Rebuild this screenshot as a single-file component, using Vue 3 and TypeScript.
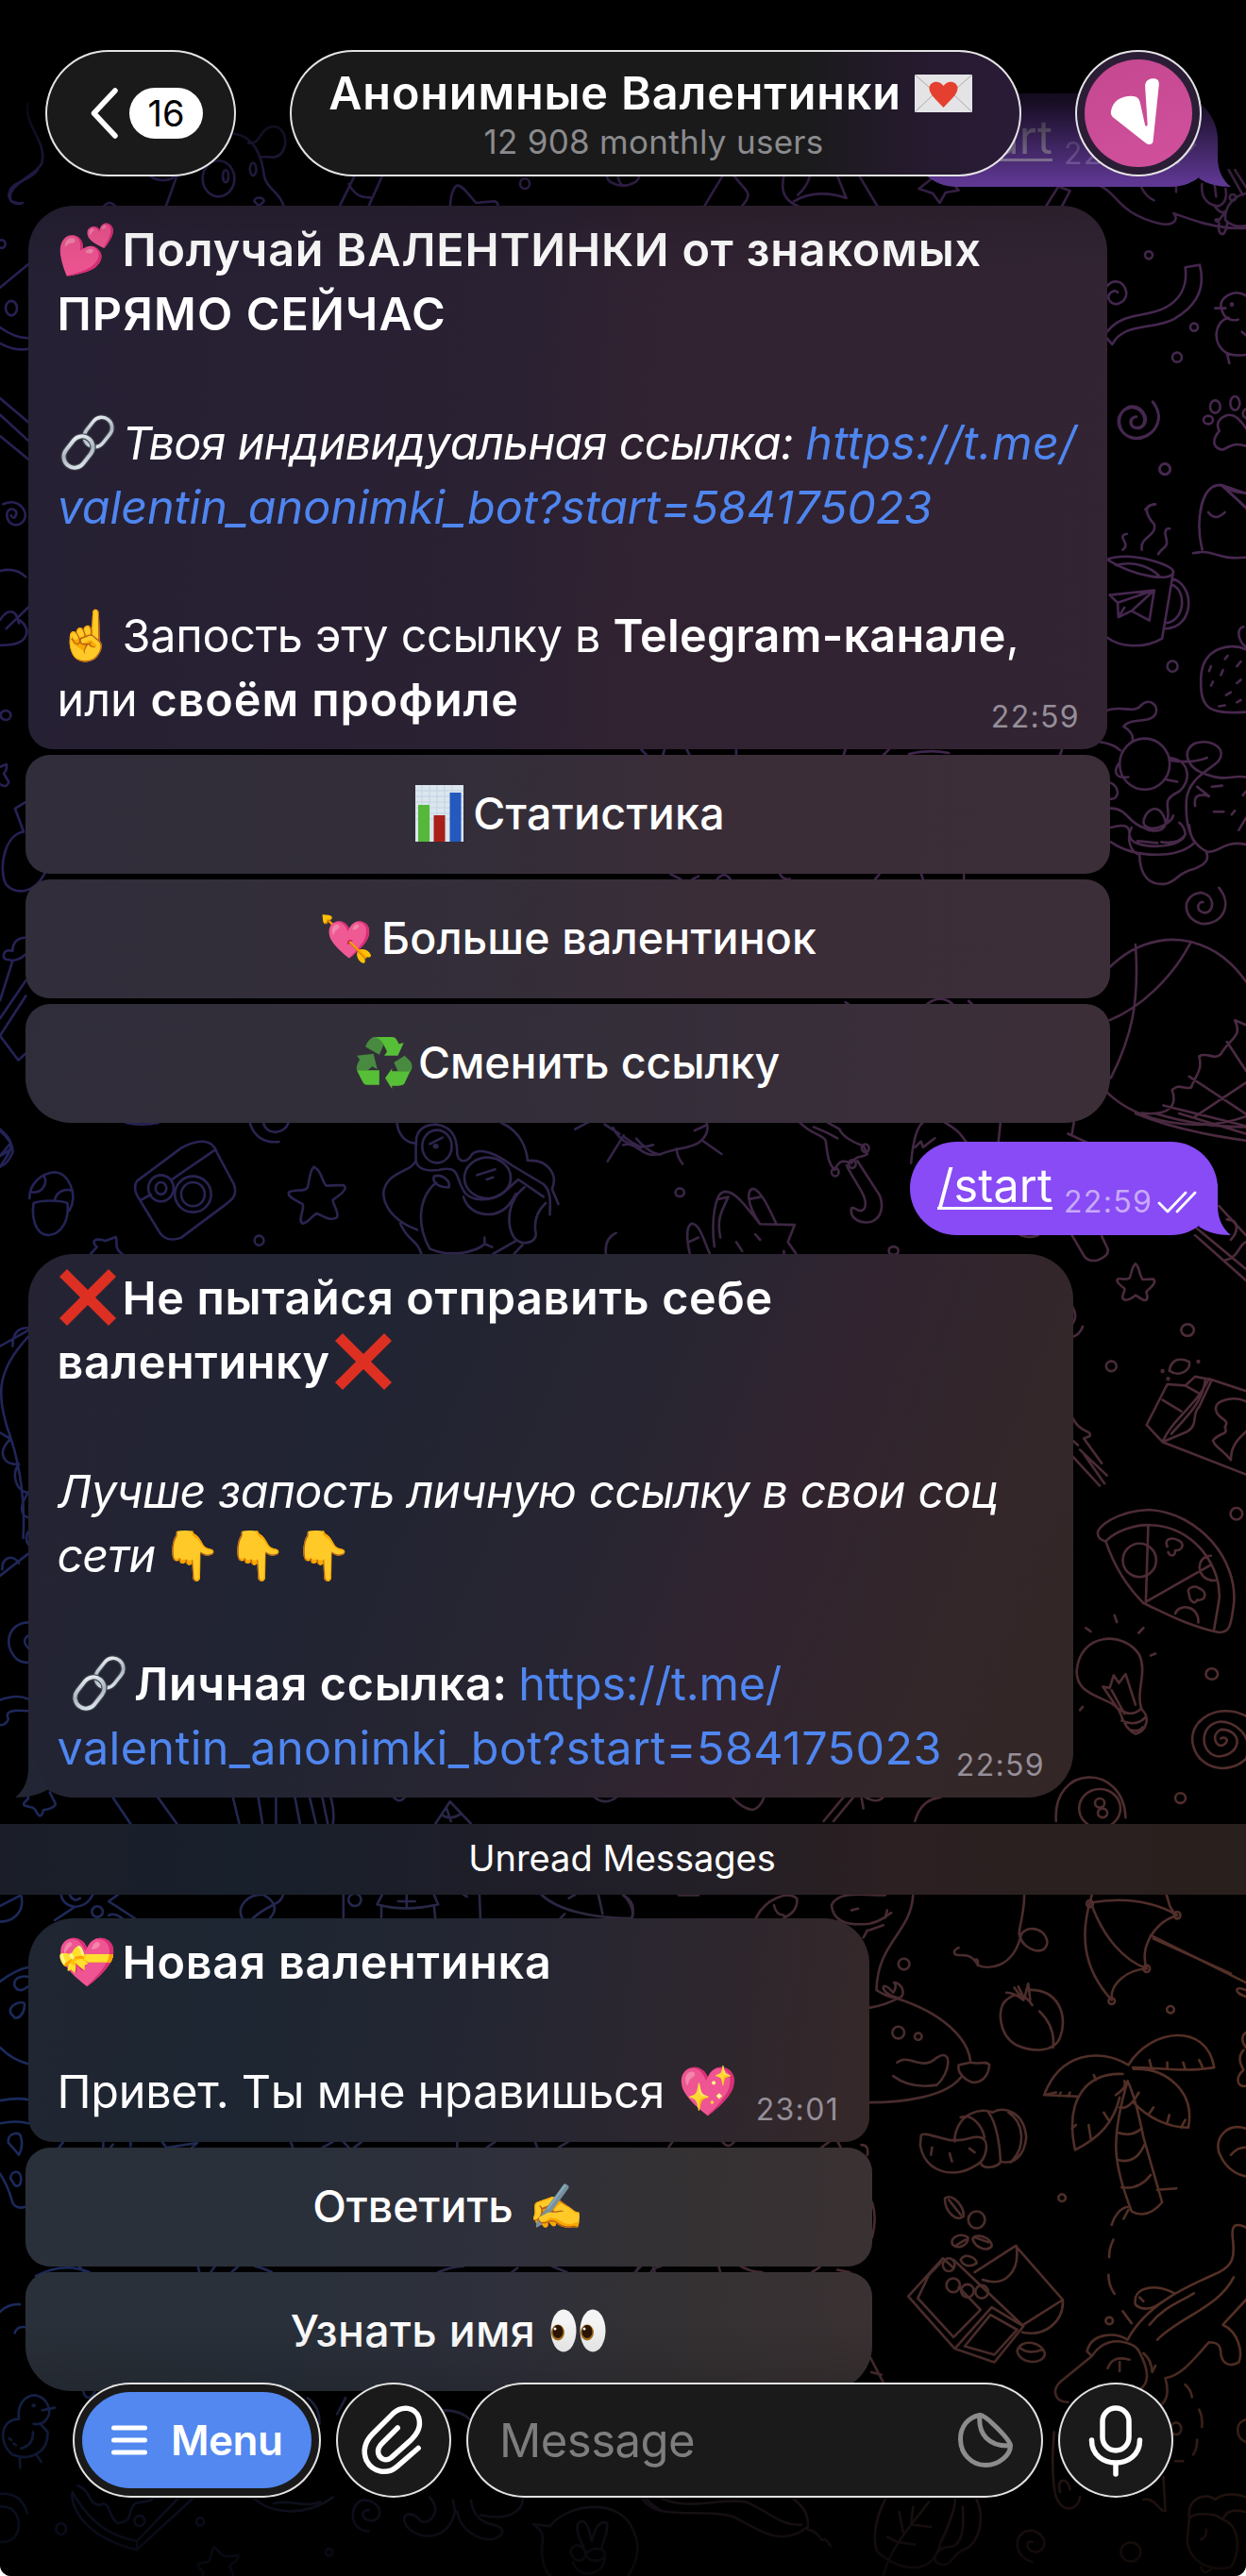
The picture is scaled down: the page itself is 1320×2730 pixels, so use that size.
<script setup lang="ts">
interface Segment {
  text?: string
  emoji?: string
  icon?: 'chain' | 'cross'
  tone?: 'bold' | 'italic' | 'link' | 'link-italic'
  tracking?: number
  before?: number
}
type Line = Segment[]

interface Sketch {
  at: string
  path: string
  dots?: number[][]
}

const promo: Line[] = [
  [{ emoji: '💕' }, { text: 'Получай ВАЛЕНТИНКИ от знакомых', tone: 'bold', tracking: 0.81 }],
  [{ text: 'ПРЯМО СЕЙЧАС', tone: 'bold', tracking: 1.15 }],
  [],
  [
    { icon: 'chain' },
    { text: 'Твоя индивидуальная ссылка: ', tone: 'italic', tracking: -0.66 },
    { text: 'https://t.me/', tone: 'link-italic', tracking: 0.43 }
  ],
  [{ text: 'valentin_anonimki_bot?start=584175023', tone: 'link-italic', tracking: -0.06 }],
  [],
  [
    { emoji: '☝️' },
    { text: 'Запость эту ссылку в ', tracking: -0.26 },
    { text: 'Telegram-канале', tone: 'bold', tracking: 0.27 },
    { text: ',' }
  ],
  [{ text: 'или ' }, { text: 'своём профиле', tone: 'bold', tracking: 0.96 }]
]

const warning: Line[] = [
  [{ icon: 'cross' }, { text: 'Не пытайся отправить себе', tone: 'bold', tracking: 0.66 }],
  [{ text: 'валентинку', tone: 'bold', tracking: 0.61 }, { icon: 'cross', before: 4 }],
  [],
  [{ text: 'Лучше запость личную ссылку в свои соц', tone: 'italic', tracking: -0.39 }],
  [
    { text: 'сети', tone: 'italic', tracking: -1 },
    { emoji: '👇', before: 8 },
    { emoji: '👇', before: 1.3 },
    { emoji: '👇', before: 1.3 }
  ],
  [],
  [
    { icon: 'chain', before: 13.5 },
    { text: 'Личная ссылка:', tone: 'bold', tracking: 0.66 },
    { text: ' ', tracking: -2 },
    { text: 'https://t.me/', tone: 'link', tracking: -0.21 }
  ],
  [{ text: 'valentin_anonimki_bot?start=584175023', tone: 'link', tracking: 0.39 }]
]

const valentine: Line[] = [
  [{ emoji: '💝' }, { text: 'Новая валентинка', tone: 'bold', tracking: 0.73 }],
  [],
  [{ text: 'Привет. Ты мне нравишься', tracking: -0.25 }, { emoji: '💖', before: 15 }]
]

/* Wallpaper line art, grouped by the area of the chat it decorates. */
const sketches: Sketch[] = [
  {
    at: 'translate(0 0) scale(.4209 .3333)',
    path: 'M70 330C60 400 120 450 105 520C90 560 10 590 28 640L50 648M445 560L418 655M378 560C400 580 430 575 440 560M585 425C640 430 660 500 665 560C670 600 705 610 714 655M625 455C660 460 650 405 690 402C725 405 730 490 690 500L655 498M892 560L855 655M962 560L928 655M878 585Q895 630 932 628M1133 655C1135 610 1145 590 1152 590C1165 590 1180 620 1198 645L1245 640Q1256 645 1252 655M262 655Q275 635 290 655M640 640C640 625 665 625 664 640L652 655ZM1555 560C1560 590 1568 590 1575 590',
    dots: [[550, 568, 40, 57], [568, 560, 7, 20], [637, 538, 8, 20], [1321, 584, 12, 16], [395, 490, 70, 60]]
  },
  {
    at: 'translate(660 0) scale(.4209 .3333)',
    path: 'M250 560L205 655M280 560C310 610 330 610 300 655M405 560C395 610 410 640 440 655M430 640C470 610 520 610 562 630L540 560M470 560Q465 590 440 620M595 560L640 655M745 600L780 565M745 600L780 615L797 645L812 612L845 605L825 575M1100 595L1125 607L1105 655M1095 595L1065 655',
    dots: [[0, 560, 40, 30]]
  },
  {
    at: 'translate(1140 180) scale(.33333)',
    path: 'M75 50C130 70 130 140 270 172C315 178 325 155 310 138C370 160 450 190 540 185M205 50Q220 85 248 97M318 50V70M400 45C395 100 430 115 455 115C475 105 480 85 475 60M440 45L445 85M485 0L530 80M505 0L540 55M540 75C490 85 470 130 475 160Q500 185 540 178M455 160C440 150 440 165 450 165L470 140M455 170C450 190 455 205 468 204C478 190 480 180 480 170M440 115Q460 145 478 130M98 370C115 350 150 345 160 390C160 430 110 440 102 405C105 385 130 380 132 390M98 515C150 450 220 470 280 440C330 415 355 370 347 310L393 302C415 390 370 440 310 475C240 510 150 485 115 555L98 535M540 400C500 375 450 410 462 440C470 480 500 480 515 476M442 440H475M485 470C440 480 430 550 475 580C500 595 540 588 540 588M480 585L487 615M527 515L545 530M243 737C290 800 240 855 190 855C130 850 120 770 170 752C220 745 240 810 200 822C165 825 165 785 192 785M540 822C520 790 500 775 480 780C450 790 445 810 455 830C430 860 435 885 465 890C490 880 500 865 540 878M395 1085C405 1020 430 1000 465 1003L545 1030M465 1003L545 1080M220 1080Q235 1062 252 1063',
    dots: [[231, 271, 12, 12], [375, 500, 12, 12], [321, 596, 15, 15], [282, 952, 17, 17], [442, 753, 16, 20], [505, 742, 15, 22], [420, 795, 15, 13], [545, 775, 15, 15], [498, 88, 10, 10], [495, 428, 3, 3]]
  },
  {
    at: 'translate(0 180) scale(.33333 .7015)',
    path: 'M120 0C90 20 30 15 28 40Q40 55 72 50M0 178L92 142M0 238Q50 255 92 254M0 262Q50 275 92 270M0 345L92 382M0 370L92 410M0 402L92 438M10 505C60 495 85 515 80 525C70 542 20 540 22 520C25 508 55 512 52 520Q45 530 35 522M0 606Q50 600 82 615M0 680C20 665 50 660 60 685M20 693L92 660M60 680C100 690 100 720 0 718M0 902L20 898Q25 905 12 912L28 925Q20 935 0 928M48 965L82 955M48 965L75 1000C10 1005 -5 1060 20 1080C50 1095 110 1095 145 1060M82 1160C50 1160 40 1170 40 1180C5 1175 5 1195 25 1193C50 1198 70 1190 82 1185M40 1195L0 1255M82 1225L0 1282M82 1248L0 1308L58 1345L82 1335M0 1452Q45 1470 40 1485Q20 1505 0 1505M40 1478L0 1490',
    dots: [[36, 209, 18, 11], [18, 824, 16, 7], [5, 112, 12, 6]]
  },
  {
    at: 'translate(660 400) scale(.4209 .5102)',
    path: 'M1258 358C1280 345 1240 330 1268 325M1306 358C1300 330 1345 330 1337 305C1320 290 1305 265 1338 264M1347 367C1360 350 1375 355 1366 330C1362 318 1368 313 1376 314M1218 378C1280 360 1390 390 1385 405C1380 425 1290 415 1218 378M1240 390C1290 380 1330 395 1350 413M1385 405L1357 542C1310 565 1250 560 1218 540M1382 418C1440 430 1440 520 1365 522M1380 430C1420 440 1415 505 1368 510M1225 452L1337 442L1325 505L1280 485L1247 498L1245 468ZM1245 468L1337 442L1280 485M1247 498L1262 478M1435 365C1490 355 1490 380 1568 374M1458 358C1440 300 1455 220 1505 223C1530 235 1545 240 1568 240M1505 223L1568 270M1473 280Q1490 300 1515 280M1568 565C1530 550 1460 560 1455 620C1450 690 1475 700 1568 695M1568 560C1545 545 1545 520 1562 518M1475 610L1480 600M1515 585L1522 578M1505 618L1510 608M1545 600L1555 590M1480 640L1485 632M1545 635L1555 628M1518 660L1530 654M1500 683L1515 681M1545 675L1555 670M1218 692C1250 680 1290 700 1305 680C1325 665 1350 680 1340 700C1325 720 1280 705 1260 725C1280 735 1285 745 1282 755M1200 757C1225 760 1240 765 1252 775M1250 800C1235 815 1235 835 1272 830M1218 840C1255 845 1250 880 1225 875M1375 795C1410 800 1440 800 1470 790M1375 790C1430 795 1430 840 1400 860C1350 880 1380 890 1370 920M1470 825C1410 810 1410 770 1440 760C1480 750 1520 770 1500 795C1490 810 1420 830 1418 880C1415 930 1430 970 1470 985C1500 990 1510 960 1568 970M1470 825C1520 840 1530 825 1568 830M1440 890C1435 865 1455 865 1475 870M1445 850L1475 870M1482 850L1508 848M1487 902L1512 902M1568 860L1560 868M1532 908L1540 900M1550 940L1568 915M1365 835L1395 840M1228 895C1270 895 1270 925 1310 935C1340 950 1380 940 1360 910C1340 880 1310 905 1310 925C1320 950 1380 930 1385 910M1228 935C1270 925 1275 935 1275 950C1275 985 1420 980 1415 945Q1410 930 1400 925M1228 965C1290 1000 1400 1000 1440 965M1280 935C1265 960 1280 990 1300 990C1300 1040 1330 1055 1365 1052C1400 1045 1390 1030 1440 1020C1470 1010 1475 1000 1468 985M1425 930Q1430 960 1440 965M1355 965Q1400 970 1415 950M1295 963L1345 967M1335 52C1370 90 1330 130 1285 125C1240 120 1230 70 1280 62C1320 65 1320 105 1295 104C1270 105 1280 80 1290 82M1500 1060C1535 1095 1510 1135 1460 1135C1410 1130 1400 1075 1455 1070C1490 1075 1490 1110 1465 1112C1440 1110 1445 1088 1460 1090M1225 1225C1330 1140 1480 1150 1568 1255M1290 1178C1300 1300 1280 1370 1228 1455M1428 1175C1380 1250 1300 1310 1225 1335M1218 1485C1300 1550 1450 1570 1568 1535M1568 1345L1540 1335C1560 1370 1530 1370 1505 1405C1490 1420 1470 1400 1450 1410C1460 1440 1440 1450 1430 1475C1410 1480 1400 1465 1382 1480C1395 1510 1380 1535 1305 1528M1425 1452L1568 1530M1520 1380L1568 1440M1360 1512L1568 1555M1568 1465L1440 1535M45 772L60 785M105 772L100 785M160 772L168 785M285 772V785M560 772L555 785M655 785L670 772M720 782Q770 772 820 780M1105 772L1100 785M120 1032L145 1042M175 1042L190 1036M237 1042Q255 1025 270 1042M395 1032Q405 1045 420 1042M635 1042L645 1032M750 1030L755 1042M858 1030V1042M765 1302Q800 1280 830 1302M560 1298L570 1303M870 1295L880 1303',
    dots: [[1364, 190, 13, 11], [1383, 600, 13, 11], [1313, 803, 63, 53]]
  },
  {
    at: 'translate(0 1180) scale(.4464 .3333)',
    path: 'M0 50C40 95 30 110 0 170M25 95L0 135M300 30Q335 40 375 30M592 25C600 75 630 95 662 90M625 28C630 70 675 70 685 28M325 215L430 110C470 80 505 80 515 125L555 225C565 260 550 275 535 290L430 395C400 410 385 395 375 370L325 260C318 240 320 225 325 215M408 210L508 118M335 275L358 258M70 270C70 220 100 190 130 187C165 190 185 260 165 308M80 285C100 275 140 275 160 285C165 340 145 385 115 387C80 385 75 320 80 285M105 200C115 230 95 255 75 250M130 275C135 245 155 240 172 245M745 170C765 180 765 225 775 230L815 228C830 240 800 265 790 275C790 290 805 315 800 330C785 345 765 325 752 318C740 325 730 350 718 350C705 340 725 300 718 288C705 278 680 265 686 250C700 240 725 250 730 235C735 210 735 180 745 170M215 447L230 425C215 405 225 395 250 405L275 393C280 410 270 430 290 447M942 30C945 70 965 95 987 95M988 100C985 60 1000 35 1038 35C1080 45 1085 90 1085 130C1090 160 1110 155 1120 130C1140 105 1180 130 1215 165L1290 225C1310 250 1305 290 1305 322M987 100V150C990 175 1010 185 1040 180C1090 165 1080 195 1098 240C1110 280 1165 290 1205 240L1230 210L1290 265M987 150C975 190 920 180 910 250C910 310 950 350 990 370M1190 30C1240 60 1250 120 1252 150C1300 145 1325 195 1310 240L1325 288M1035 220C990 270 990 360 1020 430M1245 235C1205 275 1200 350 1220 395C1240 425 1270 410 1272 385C1265 340 1275 310 1295 285M950 350C970 410 990 400 1000 447M1100 265C1110 310 1140 325 1170 320C1200 310 1210 290 1225 255M1020 430C1070 460 1130 440 1150 415L1168 425M1150 395V412M1170 447L1225 405M1220 447L1240 418M1030 200C1050 190 1070 215 1065 235C1040 235 1025 220 1030 200M1020 97L1050 77M1132 196L1175 178M1155 210L1170 203M1438 447C1435 410 1445 390 1462 380M1365 50L1400 25M1435 35L1470 65M1442 152L1480 70M1455 45C1470 90 1510 120 1550 100M1510 80C1530 110 1550 130 1568 130M0 740L67 690M30 740C30 690 50 680 67 682M67 710C-10 820 -10 900 25 1030C50 1130 60 1250 55 1350M0 1015L25 1035C-10 1080 10 1120 45 1115C25 1150 40 1205 67 1205M65 1210C45 1250 50 1280 67 1285M67 1330Q58 1350 67 1370M0 1470L67 1400M5 1450C5 1410 30 1400 45 1430',
    dots: [[382, 238, 30, 42], [382, 238, 13, 19], [458, 257, 43, 57], [458, 257, 28, 38], [615, 404, 11, 15], [1037, 105, 35, 52], [1157, 205, 55, 65], [1034, 104, 4, 4]]
  },
  {
    at: 'translate(660 1180) scale(.4209 .4783)',
    path: 'M0 70C40 60 40 100 95 90C140 75 160 80 190 65C215 50 215 30 210 20M0 50Q20 65 45 75M180 38L212 25M200 60L248 90M135 78Q135 95 150 112M168 310C155 260 165 240 178 245C195 250 205 285 218 310M165 285L190 275M230 295C220 230 235 180 250 175C275 165 305 200 345 245C310 200 310 165 330 167C350 175 370 215 385 243M345 245L432 247L415 285L435 310M240 190L265 185C250 215 235 230 245 275M318 190L345 185M285 285L300 305M333 268L345 280M405 305V312M445 20C480 50 500 45 510 60C515 90 515 110 533 125C545 100 560 105 575 110C590 90 600 100 615 90L605 72C580 65 550 50 545 35L515 20M480 30Q510 40 540 55M563 115C580 150 620 185 608 210C595 225 585 205 575 210C570 235 600 245 625 240C655 230 655 200 645 180L590 105M725 110C730 60 740 30 755 20M735 75L750 62L755 75L785 55M810 20C840 35 850 45 865 65M950 20L945 62M1120 45L1170 65M1135 20L1130 45M1290 0Q1400 40 1568 60M1340 0Q1450 30 1568 30M1400 0L1568 45M1000 270Q1025 278 1045 270M1130 270L1160 315Q1170 330 1195 325Q1225 315 1220 300L1205 272M1290 333C1300 340 1300 360 1308 368L1335 367C1345 375 1325 388 1317 395C1320 405 1322 412 1315 414C1305 414 1297 405 1290 403C1280 410 1265 418 1258 410C1255 400 1265 395 1262 388C1250 380 1240 372 1245 367C1255 365 1268 370 1275 365C1280 355 1280 340 1290 333M1132 430C1142 445 1140 455 1132 465M1132 495Q1150 490 1157 472M1132 675C1150 710 1180 700 1175 715L1160 720L1205 775M1150 745L1218 802M1160 755L1212 820M1132 760L1200 825M1132 725L1145 735M1500 205L1568 270M1440 270L1568 370M1445 255L1568 345M1520 235C1550 235 1550 260 1530 280M1568 285C1550 290 1550 320 1515 325M1370 600L1415 603L1440 583L1482 590L1450 650C1430 665 1450 690 1420 705L1358 728L1318 690ZM1358 635L1405 660M1415 603L1450 620M1358 728C1380 680 1440 650 1475 588M1380 710C1410 680 1460 640 1465 592M1475 588L1568 615M1358 728L1568 800M1375 570C1380 545 1400 540 1425 550C1430 570 1400 585 1375 570M1568 638C1540 625 1490 635 1492 655C1495 680 1530 675 1515 695C1525 715 1500 705 1485 725C1490 740 1510 745 1530 768C1530 735 1550 720 1568 705M1195 930C1190 920 1240 880 1325 878C1450 885 1550 990 1537 1090C1530 1130 1530 1150 1500 1150C1420 1135 1360 1105 1310 1085C1270 1050 1235 1000 1215 948C1200 945 1195 940 1195 930M1215 948C1240 925 1290 910 1330 912C1440 915 1510 1010 1500 1080L1488 1142M1322 912L1316 1082L1480 1000M1480 980C1440 980 1440 1035 1490 1035M1390 1108C1400 1085 1450 1090 1448 1128M1370 960C1360 940 1385 940 1395 945C1415 950 1410 970 1390 968C1390 985 1375 980 1372 972M1425 1065C1415 1050 1440 1045 1450 1052C1470 1058 1470 1080 1445 1078C1440 1090 1425 1080 1425 1065M1252 1330C1240 1290 1140 1300 1142 1235C1150 1150 1260 1145 1300 1200C1320 1240 1290 1280 1305 1320C1330 1340 1315 1370 1290 1375Q1265 1365 1252 1330ZM1250 1320Q1280 1340 1305 1318M1255 1345Q1290 1360 1315 1338M1275 1365Q1300 1372 1308 1360M1250 1325L1208 1270L1225 1273L1235 1245L1248 1262L1265 1242L1290 1310M1230 1278L1262 1330M1165 1140L1177 1148M1237 1112L1243 1127M1310 1140L1298 1151M1328 1201L1340 1197M1150 1322L1157 1315M1568 1335C1500 1305 1430 1340 1433 1390C1440 1450 1520 1470 1568 1430C1590 1380 1540 1345 1500 1348C1450 1355 1450 1420 1500 1425C1560 1420 1560 1365 1505 1365C1480 1375 1490 1405 1510 1400C1530 1390 1515 1378 1505 1385M1090 1568C1080 1440 1260 1440 1265 1560M275 1515Q300 1540 325 1543Q345 1540 355 1515M505 1568L555 1515M530 1568L580 1515M600 1515L605 1540M610 1515Q640 1530 655 1515M735 1568Q750 1520 800 1515',
    dots: [[143, 175, 11, 9], [534, 130, 9, 9], [577, 112, 9, 9], [610, 77, 9, 9], [681, 304, 12, 9], [1229, 560, 13, 11], [1421, 480, 16, 13], [1300, 990, 42, 37], [1544, 887, 15, 13], [1482, 1242, 15, 12], [1403, 1517, 13, 11], [1200, 1540, 52, 43], [1200, 1528, 12, 10], [1207, 1550, 12, 10], [1358, 571, 2, 2], [1448, 550, 2, 2], [1372, 588, 2, 2]]
  },
  {
    at: 'translate(0 1700) scale(.4464 .3333)',
    path: 'M67 58C20 60 5 130 40 175Q55 188 67 185M67 100Q50 115 67 140M0 305Q40 285 67 302M67 340C30 335 10 340 20 365Q15 385 0 385M65 610C75 620 50 630 58 640C75 650 80 640 88 665Q97 685 103 655C125 650 135 640 130 630L118 598M268 615L310 699M375 615L420 699M553 615L568 699M613 615L623 699M655 615V699M700 615L712 699M735 615L750 699M765 615L778 699M785 615Q795 660 790 699M935 615Q948 635 960 615M1033 699L1068 628L1118 699M1048 670Q1070 690 1095 665M1070 690L1060 650M1412 615Q1435 640 1462 615M0 960L50 925M50 925C60 980 30 1010 0 1010M145 924C150 970 200 980 220 924M175 965L130 1005M165 924Q175 950 190 935M280 924L258 945L320 999M258 990Q270 980 290 999M575 999C560 960 590 920 625 924M625 924C660 950 655 980 640 999M672 924C665 960 640 950 600 999M815 924V999M907 924L895 955Q960 980 1040 955L1030 924M905 960V995M1030 960L1033 999M965 924V965M945 945H985M1138 924L1140 999M1100 924L1108 930M1285 924C1320 970 1400 1000 1500 999C1508 970 1490 940 1480 924M1420 924L1430 985M1330 999L1340 985M1350 935L1365 924M0 1200Q40 1160 67 1155M35 1215C30 1190 50 1180 67 1185M35 1215Q45 1240 67 1215M25 1300C20 1275 50 1260 58 1270C60 1300 45 1320 35 1315ZM0 1410Q30 1450 67 1462',
    dots: [[231, 978, 13, 17], [842, 940, 15, 20]]
  },
  {
    at: 'translate(0 2190) scale(.4464 .3444)',
    path: 'M0 105Q40 95 67 102M0 175Q40 165 67 175M20 235C15 205 50 195 50 220C55 245 50 260 45 272ZM25 345C25 320 50 315 50 345C50 370 40 370 35 365ZM0 330Q20 370 30 420Q40 440 60 432M140 250L150 232M245 250V232M262 250L268 240M310 232V245M385 232L395 250L468 235L455 250M690 232L695 250M765 250L790 232M815 232L828 250M840 250L858 232M1085 232V250M1155 250L1175 232M1270 232L1275 250M1325 250L1348 232M85 645Q150 600 212 633M188 615L200 633M470 615L473 633M500 633L510 615M550 633L565 615M605 615Q625 620 645 633M1040 633Q1075 615 1100 615M1215 633L1228 620M1310 615L1345 633M1510 633L1515 615M1545 633Q1550 620 1568 615M0 755Q20 730 47 732M35 820Q40 798 62 802M45 1085C40 1040 60 1010 85 1012C115 1020 120 1060 115 1075Q105 1105 80 1100M100 1058L130 1050M45 1085C0 1085 -5 1160 30 1195C70 1215 115 1190 113 1125L95 1098M78 1125Q80 1165 50 1175M22 1145L27 1150M32 1160L38 1165M47 1205L48 1235M88 1198L98 1217M198 1000C200 1020 215 1030 225 1000M0 1315Q50 1310 65 1375M0 1355C40 1350 50 1400 42 1430C35 1460 15 1465 0 1463M172 1310C165 1350 200 1450 325 1487L460 1326M172 1310C190 1350 230 1440 325 1460L425 1326M325 1460V1487M185 1290C220 1310 205 1340 235 1350C265 1330 255 1390 280 1405C320 1400 300 1370 320 1345C340 1335 370 1345 365 1310M600 1326C640 1375 720 1390 790 1326M650 1345C690 1330 720 1360 760 1340M820 1020L800 1070M730 1020Q760 1050 758 1100M1030 1060Q1090 1050 1118 1090M875 1430C830 1430 825 1350 860 1335C900 1330 915 1385 885 1398C855 1395 855 1365 875 1365M1020 1326C1050 1370 1020 1410 1000 1400C980 1370 955 1370 960 1400C970 1450 1060 1480 1080 1370L1075 1335M1085 1370C1090 1420 1130 1460 1170 1455C1200 1440 1200 1420 1170 1410C1130 1400 1120 1360 1118 1335M1140 1380C1200 1400 1245 1370 1240 1326M1305 1415L1265 1408Q1290 1430 1288 1455C1280 1530 1300 1568 1310 1568M1305 1415C1350 1340 1470 1330 1500 1420C1525 1480 1510 1530 1490 1568M1385 1478C1360 1420 1370 1395 1385 1400C1400 1410 1400 1450 1405 1462C1410 1420 1425 1395 1440 1405C1445 1430 1430 1465 1428 1480M1355 1500C1350 1470 1385 1460 1390 1500C1385 1530 1365 1525 1355 1500M1390 1500C1410 1475 1440 1480 1435 1510C1415 1530 1395 1520 1390 1500M1360 1525Q1370 1565 1400 1560Q1430 1555 1435 1515M508 1480C520 1490 525 1505 535 1508L565 1505C570 1520 545 1530 545 1540L555 1568M508 1480C495 1500 505 1520 490 1525L470 1530C465 1545 490 1550 480 1568M1530 1326Q1545 1350 1568 1365',
    dots: [[145, 1423, 12, 17], [475, 1401, 9, 12], [331, 1398, 12, 16], [781, 1495, 8, 11], [80, 1043, 2, 2]]
  },
  {
    at: 'translate(660 1900) scale(.4209 .5293)',
    path: 'M0 205Q35 220 22 250M140 205H190M335 250C360 210 420 195 438 212C440 235 420 245 405 250M380 225Q385 245 405 245M730 205C725 280 640 300 638 395M660 205C610 205 540 195 525 225C530 265 580 265 620 262C650 258 665 245 675 240M665 235L660 250M605 290L615 275M620 275L655 265M575 235L592 232M638 395C660 405 670 410 690 410C640 400 650 370 680 400C690 390 685 380 682 380C705 380 715 410 690 412M622 430Q660 425 690 412C800 440 870 490 875 540C900 545 915 535 922 545C920 570 900 580 880 580C860 575 840 560 845 545L875 540M620 620C700 620 810 610 850 570M690 540C720 520 750 560 790 530C830 510 825 560 790 585C750 590 710 585 680 567M1010 205C1010 250 990 280 1000 290C1010 315 1065 330 1068 298C1060 265 1005 265 1000 290C980 350 920 355 893 345C880 325 865 325 845 325C830 325 830 315 845 310M893 345Q895 330 885 335M1180 205C1150 280 1155 350 1230 415C1225 380 1270 355 1318 352C1300 310 1335 260 1395 245C1370 230 1375 215 1368 205M1175 220C1250 210 1330 215 1395 245M1180 225C1210 290 1260 335 1318 352M1328 285L1568 380M1335 292L1530 362M1568 395C1540 385 1535 400 1568 408M1015 395C1100 390 1120 450 1100 490C1085 520 1030 520 990 505C945 485 940 430 965 415C985 400 1010 400 1030 425M1048 437Q1090 470 1082 510M965 400Q985 400 1008 415L985 390M995 388L1010 412L1020 382L1025 415M1272 545C1200 510 1100 520 1060 605L1145 608M1272 545C1330 470 1470 460 1488 550C1410 560 1350 550 1283 550M1258 563C1170 560 1110 610 1138 715C1200 690 1235 660 1250 610M1285 553C1370 550 1440 600 1423 670C1370 670 1320 650 1285 620M1060 605L1090 600M1098 607L1102 600M1120 608L1125 600M1270 577C1225 700 1235 740 1280 838Q1320 855 1357 820L1310 690Q1290 610 1270 577M1240 605Q1270 590 1262 577M1250 630Q1275 635 1298 600M1245 680Q1280 690 1305 672M1245 735Q1290 745 1312 705M1255 790Q1300 795 1328 765M1345 795L1393 792M1325 535L1330 550M1370 540V553M1410 540L1415 553M1450 535L1458 548M1185 565L1190 575M1210 640L1222 655M1172 665L1178 695M1130 672L1140 665M1322 645L1335 630M1370 660L1375 645M1405 670L1415 655M1275 828C1250 830 1235 850 1230 865M1260 853L1272 835M1234 895C1225 910 1223 920 1224 930M1222 965C1222 985 1230 995 1237 1003M1258 1038L1280 1062M835 690C845 640 900 630 930 640C960 625 1010 640 1015 690C1010 730 980 745 950 738M750 690C745 675 790 690 820 695C860 700 880 685 900 690C925 695 915 735 890 745C830 775 760 760 748 705ZM835 690V698M850 650C880 640 905 670 910 690M920 640C940 660 950 710 950 740C940 750 910 755 900 742M970 640C1010 660 1015 710 975 740M778 710L775 725M822 722L828 738M872 712L885 720M810 812C830 800 860 830 857 848C840 860 810 840 810 812M820 815L850 845M830 905C820 890 850 880 868 890C870 905 845 915 830 905M840 905L862 895M880 893C885 880 930 890 928 908C915 920 885 910 880 893M885 890L920 900M850 935C860 920 890 930 890 942C870 952 855 945 850 935M805 932L718 1008L835 1113L935 1140L1008 1068L928 1030L835 1113M770 965L742 1012L832 1090L900 1035L845 990M805 932L830 950M860 1108L925 1045L992 1075L935 1125ZM832 935L1008 1068M885 960L988 907L1107 1015L1008 1065M905 975C960 990 1000 960 990 907M1107 1015C1110 1060 1060 1090 1005 1080M992 1118C1000 1090 1060 1100 1062 1125C1055 1145 1000 1145 992 1118M1000 1112Q1020 1125 1055 1115M770 965L800 940M1568 672C1520 660 1490 690 1500 720Q1520 760 1568 768M1530 725Q1545 710 1568 710M1568 480Q1550 490 1568 510M1562 515C1545 530 1555 545 1562 555C1540 570 1545 590 1568 587M1568 870C1540 860 1530 865 1535 895C1540 930 1535 945 1500 960C1430 985 1320 1020 1270 1095M1568 1015L1510 1065C1550 1080 1560 1120 1550 1140C1530 1150 1510 1145 1505 1125C1505 1105 1495 1100 1475 1100C1440 1130 1410 1165 1365 1172C1375 1200 1370 1215 1355 1225M1270 1095C1240 1080 1180 1080 1168 1118L1180 1128C1220 1080 1290 1100 1300 1120C1320 1150 1330 1180 1300 1195M1180 1128L1100 1180C1080 1195 1085 1220 1120 1220M1220 1152C1230 1130 1250 1130 1275 1135M1250 1140V1158M1310 1122Q1330 1135 1332 1160L1340 1147M1390 1003C1340 980 1280 990 1290 1025C1310 1040 1340 1030 1355 1020M1300 1010L1310 1018M1325 1065C1360 1030 1400 1020 1437 1002M1345 1095C1400 1050 1500 1030 1537 970M1415 1185Q1430 1195 1432 1210M1450 1235Q1460 1250 1457 1270M1445 1295Q1445 1315 1435 1325M1410 1338H1390M1568 1255C1540 1260 1540 1290 1568 1300M1085 1280C1080 1330 1080 1380 1090 1410C1110 1450 1150 1430 1150 1410M1100 1400C1090 1370 1120 1370 1125 1395M1310 1415C1340 1410 1350 1440 1365 1438L1360 1370M622 1130L655 1180M625 1160L650 1165M627 820Q640 850 627 890M540 698L548 710M600 705Q620 705 615 725M500 710L520 698M115 710L125 698M250 698Q265 715 280 698M30 960L45 948M75 945L80 960M240 945L245 960M290 945Q320 960 350 960M475 960L495 950M540 955L570 960M50 1415C90 1460 200 1430 280 1450C350 1480 400 1510 465 1470C470 1440 440 1420 430 1415M90 1410C160 1440 250 1410 310 1420C370 1440 400 1470 450 1465M465 1475C500 1480 490 1500 510 1495L523 1508M660 1415C630 1460 630 1500 640 1520C700 1560 780 1570 800 1500C820 1470 840 1420 835 1415M655 1568C670 1520 700 1490 770 1420M695 1440L705 1480M665 1490L690 1500L735 1505M730 1430L725 1465L775 1470M800 1545C770 1540 790 1510 820 1510C850 1510 860 1480 855 1430M800 1545C830 1550 830 1520 860 1515C900 1500 910 1450 890 1415M1030 1540C980 1530 980 1475 1030 1477C1070 1485 1070 1520 1035 1520C1010 1515 1015 1495 1030 1500M1425 1450C1420 1410 1470 1400 1490 1415C1520 1395 1568 1410 1568 1410M1425 1455C1430 1440 1490 1440 1510 1455C1560 1470 1550 1530 1530 1550C1500 1560 1430 1550 1420 1500ZM1510 1455Q1520 1430 1568 1440M1455 1550Q1460 1568 1480 1555M1455 1495Q1470 1490 1468 1475',
    dots: [[707, 343, 14, 11], [693, 480, 15, 12], [743, 488, 9, 7], [1378, 434, 9, 7], [1105, 811, 9, 7], [890, 855, 21, 17], [1224, 1057, 9, 7], [820, 945, 15, 13], [831, 986, 17, 14], [867, 997, 16, 13], [903, 999, 16, 13], [1175, 222, 8, 7], [1230, 417, 8, 6], [1318, 352, 8, 7], [1395, 245, 8, 7], [1278, 1520, 25, 19], [1392, 1273, 13, 12]]
  }
]
</script>

<template>
  <div class="screen">
    <svg class="wallpaper" viewBox="0 0 1320 2730" width="1320" height="2730" aria-hidden="true">
      <defs>
        <linearGradient id="upper" x1="0" x2="1" y1="0" y2="0">
          <stop offset="0" stop-color="#292055" /><stop offset=".5" stop-color="#352350" />
          <stop offset="1" stop-color="#48284f" />
        </linearGradient>
        <linearGradient id="lower" x1="0" x2="1" y1="0" y2="0">
          <stop offset="0" stop-color="#1a2a5c" /><stop offset=".45" stop-color="#2b2840" />
          <stop offset=".6" stop-color="#432a31" /><stop offset="1" stop-color="#563023" />
        </linearGradient>
        <linearGradient id="descend" x1="0" x2="0" y1="0" y2="1">
          <stop offset=".25" stop-color="#000" /><stop offset=".8" stop-color="#fff" />
        </linearGradient>
        <mask id="lowerHalf"><rect width="1320" height="2730" fill="url(#descend)" /></mask>
        <mask id="doodles" maskUnits="userSpaceOnUse" x="0" y="0" width="1320" height="2730">
          <g v-for="(s, i) in sketches" :key="i" :transform="s.at" class="ink">
            <path :d="s.path" />
            <ellipse v-for="(d, j) in s.dots" :key="j" :cx="d[0]" :cy="d[1]" :rx="d[2]" :ry="d[3]" />
          </g>
        </mask>
        <linearGradient id="metal" x1="0" x2="1" y1="0" y2="1">
          <stop offset="0" stop-color="#f3f7fb" /><stop offset=".5" stop-color="#a9b4c0" />
          <stop offset="1" stop-color="#e6edf3" />
        </linearGradient>
      </defs>
      <g mask="url(#doodles)">
        <rect width="1320" height="2730" fill="url(#upper)" />
        <rect width="1320" height="2730" fill="url(#lower)" mask="url(#lowerHalf)" />
      </g>
    </svg>

    <main class="chat">
      <div class="outgoing first">
        <span class="command">/start</span><span class="time">22:59</span>
        <svg class="checks" viewBox="0 0 42 24"><path d="M2 13L11 22L30 2M21 22L40 2" /></svg>
        <svg class="tail" viewBox="0 0 50 55"><path d="M36 0V24C36 38 42 49 50 55C36 55 25 52 16 46Z" /></svg>
      </div>

      <template
        v-for="block in [
          { name: 'promo', lines: promo, time: '22:59' },
          { name: 'warning', lines: warning, time: '22:59' },
          { name: 'valentine', lines: valentine, time: '23:01' }
        ]"
        :key="block.name"
      >
        <div v-if="block.name === 'warning'" class="outgoing">
          <span class="command">/start</span><span class="time">22:59</span>
          <svg class="checks" viewBox="0 0 42 24"><path d="M2 13L11 22L30 2M21 22L40 2" /></svg>
          <svg class="tail" viewBox="0 0 50 55"><path d="M36 0V24C36 38 42 49 50 55C36 55 25 52 16 46Z" /></svg>
        </div>
        <div v-if="block.name === 'valentine'" class="unread">Unread Messages</div>

        <article class="bubble" :class="block.name">
          <div class="body">
            <div v-for="(line, i) in block.lines" :key="i" class="line">
              <template v-for="(seg, j) in line" :key="j">
                <span v-if="seg.emoji" class="emoji" :style="{ marginLeft: (seg.before ?? 1) + 'px' }">{{ seg.emoji }}</span>
                <svg v-else-if="seg.icon === 'cross'" class="emoji" viewBox="0 0 62 62" :style="{ marginLeft: (seg.before ?? 1) + 'px' }">
                  <path fill="#dd3022" d="M9 1L31 23L53 1L61 9L39 31L61 53L53 61L31 39L9 61L1 53L23 31L1 9Z" />
                </svg>
                <svg v-else-if="seg.icon === 'chain'" class="emoji chain" viewBox="0 0 62 62" :style="{ marginLeft: (seg.before ?? 1) + 'px' }">
                  <rect x="-11" y="-17" width="22" height="34" rx="11" transform="translate(42 20) rotate(38)" stroke="#3d4148" stroke-width="6" />
                  <rect x="-11" y="-17" width="22" height="34" rx="11" transform="translate(42 20) rotate(38)" stroke="url(#metal)" stroke-width="3.6" />
                  <rect x="-11.5" y="-18" width="23" height="36" rx="11.5" transform="translate(21 41) rotate(38)" stroke="#3d4148" stroke-width="6.4" />
                  <rect x="-11.5" y="-18" width="23" height="36" rx="11.5" transform="translate(21 41) rotate(38)" stroke="url(#metal)" stroke-width="4" />
                </svg>
                <span v-else :class="seg.tone" :style="{ letterSpacing: (seg.tracking ?? 0) + 'px' }">{{ seg.text }}</span>
              </template>
            </div>
          </div>
          <span class="time">{{ block.time }}</span>
          <svg v-if="block.name === 'warning'" class="tail" viewBox="0 0 50 55"><path d="M14 0V24C14 38 8 49 0 55C14 55 25 52 36 46Z" /></svg>
        </article>

        <div v-if="block.name === 'promo'" class="keyboard wide">
          <button>
            <svg class="glyph" viewBox="0 0 60 60">
              <rect x="5" y="0" width="51" height="60" fill="#dbe6ee" />
              <path d="M5 6H56M5 12H56M5 18H56M5 24H56M5 30H56M5 36H56M12 0V60M20 0V60M28 0V60M36 0V60M44 0V60" stroke="#c3d3e2" />
              <rect x="8" y="21" width="12" height="39" fill="#55b83a" />
              <rect x="24.500" y="32" width="12" height="28" fill="#a92018" />
              <rect x="41.500" y="8" width="12" height="52" fill="#2459bd" />
            </svg>
            <span class="s1">Статистика</span>
          </button>
          <button><span class="glyph">💘</span><span class="s2">Больше валентинок</span></button>
          <button>
            <svg class="glyph" viewBox="0 0 58 54">
              <path fill="#478a40" d="M18 1C13 3 10 9 10 11L24 19L29 8C26 2 22 1 18 1ZM1 20L18 18L22 34L17 31L12 35H1C0 31 2 27 4 24ZM50 20L39 27L43 36H56C59 31 57 28 56 26Z" />
              <path fill="#57bf37" d="M18 1H37C41 1 42 4 44 8L49 7L43 20H29L32 16L28 8C25 3 22 1 18 1ZM1 35H24V50H11C8 50 7 47 1 35ZM57 33L50 48C49 50 47 51 37 51V54L30 43L37 33V36H53C55 36 56 35 57 33Z" />
            </svg>
            <span class="s3">Сменить ссылку</span>
          </button>
        </div>
        <div v-if="block.name === 'valentine'" class="keyboard narrow">
          <button><span>Ответить</span><span class="glyph after">✍️</span></button>
          <button>
            <span class="s1">Узнать имя</span>
            <svg class="glyph after" viewBox="0 0 60 60">
              <g v-for="x in [14, 45]" :key="x">
                <ellipse :cx="x" cy="30" rx="13.500" ry="22.500" fill="#f4f4f4" />
                <ellipse :cx="x - 6" cy="32" rx="7" ry="8.500" fill="#a8711c" />
                <ellipse :cx="x - 6" cy="31" rx="5.500" ry="7" fill="#2b1404" />
                <circle :cx="x - 9" cy="28" r="1.500" fill="#fff" />
              </g>
            </svg>
          </button>
        </div>
      </template>
    </main>

    <div class="fade top"></div>
    <div class="fade bottom"></div>

    <header class="topbar">
      <div class="glass back">
        <svg width="30" height="56" viewBox="0 0 30 56"><path d="M26 4L3.500 28L26 52" /></svg>
        <span class="count">16</span>
      </div>
      <div class="glass title">
        <h1>
          <span>Анонимные Валентинки</span>
          <svg width="61" height="40" viewBox="0 0 61 40">
            <rect width="61" height="40" rx="1.500" fill="#e4e4e6" />
            <path d="M0 0L25 22M61 0L36 22M0 40L22 19M61 40L39 19" stroke="#a9a9ac" fill="none" />
            <path d="M30.500 35C22 26 15 20 15.500 14C16 7 26 5 30.500 12C35 5 45 7 45.500 14C46 20 39 26 30.500 35Z" fill="#e5402f" />
          </svg>
        </h1>
        <p>12 908 monthly users</p>
      </div>
      <div class="glass avatar">
        <svg width="114" height="114" viewBox="1161 189 272 342" preserveAspectRatio="none">
          <path d="M1228 352C1232 320 1255 305 1278 305C1298 305 1300 318 1302 330L1314 398C1318 404 1320 400 1320 394L1314 275C1314 255 1325 250 1335 250C1345 250 1350 256 1349 270L1334 450C1332 462 1322 460 1316 455L1232 372Q1226 364 1228 352Z" fill="#fff" />
        </svg>
      </div>
    </header>

    <footer class="composer">
      <div class="glass menu">
        <div class="menu-fill">
          <svg width="38" height="32" viewBox="0 0 38 32"><path d="M2.500 3H35.500M2.500 16H35.500M2.500 29H35.500" /></svg>
          <span>Menu</span>
        </div>
      </div>
      <div class="glass round">
        <svg width="122" height="122" viewBox="798 973 273 353" preserveAspectRatio="none">
          <path d="M993 1174L943 1230C920 1256 885 1250 870 1212C860 1180 866 1155 885 1130L933 1068C955 1042 985 1048 994 1080C1000 1108 992 1128 975 1150L928 1204C916 1216 902 1208 898 1190C896 1178 900 1168 908 1158L944 1112" />
        </svg>
      </div>
      <div class="glass field">
        <span>Message</span>
        <svg width="58" height="58" viewBox="0 0 58 58"><path d="M23 2.500C10 5 2.500 15 2.500 28C2.500 43 14 55.500 29 55.500C44 55.500 55.500 44 55.500 35C55.500 29 29 2 23 2.500ZM23 3C21 22 32 36 55 35" /></svg>
      </div>
      <div class="glass round">
        <svg width="122" height="122" viewBox="0 0 122 122">
          <rect x="47" y="27" width="28" height="45" rx="14" />
          <path d="M35.500 61C35.500 93 86.500 93 86.500 61M61 85V97" />
        </svg>
      </div>
    </footer>
  </div>
</template>

<style>
body { margin: 0; background: #fff; }
</style>

<style scoped>
.screen {
  position: relative;
  width: 1320px;
  height: 2730px;
  overflow: hidden;
  background: #000;
  border-radius: 0 0 12px 12px;
  color: #fff;
  font-family: Inter, "Liberation Sans", "Noto Color Emoji", sans-serif;
  font-size: 48.5px;
}
.wallpaper { position: absolute; inset: 0; }
.ink { fill: none; stroke: #fff; stroke-width: 2.6px; stroke-linecap: round; stroke-linejoin: round; }
.ink > * { vector-effect: non-scaling-stroke; }

.chat { position: relative; display: flex; flex-direction: column; align-items: flex-start; padding-top: 99px; }
.bubble {
  position: relative;
  display: grid;
  box-sizing: border-box;
  margin-left: 30px;
  padding: 13.300px 29px 14px 30.500px;
  border-radius: 48px;
}
.body, .bubble > .time { grid-area: 1 / 1; }
.bubble > .time { align-self: end; justify-self: end; }
.line { display: flex; height: 68.150px; line-height: 68.150px; white-space: pre; }
.promo {
  width: 1143px; height: 576px; margin-top: 20px; border-radius: 48px 48px 26px 26px;
  background: linear-gradient(96deg, #262034 0%, #2a2132 45%, #302231 55%, #322433 100%);
}
.warning {
  width: 1107px; height: 576px; margin-top: 20px; padding-right: 30px;
  background: linear-gradient(112deg, #252333 0%, #212433 30%, #282531 55%, #312430 68%, #33272a 85%, #332625 100%);
}
.valentine {
  width: 891px; height: 237px; margin-top: 25px; padding-right: 32px; border-radius: 48px 48px 26px 26px;
  background: linear-gradient(98deg, #202632 0%, #1d2632 25%, #242632 55%, #2c262f 75%, #352829 100%);
}
.bold { font-weight: 600; }
.italic, .link-italic { font-style: italic; }
.link, .link-italic { color: #4f86f0; }
.emoji {
  flex: none; width: 62px; height: 62px; margin-top: 2px; margin-right: 6px;
  display: flex; justify-content: center; line-height: 64px; font-size: 51px;
  font-family: "Noto Color Emoji", sans-serif; font-style: normal;
}
.chain { fill: none; }
.time { font-size: 32px; line-height: 40px; letter-spacing: 1.320px; color: #968f99; }

.outgoing {
  position: relative; box-sizing: border-box; display: flex; align-items: flex-start;
  width: 326px; height: 99px; margin: 20px 0 0 964px; padding-left: 29px;
  border-radius: 49.500px; background: #884bf5;
}
.outgoing.first { margin-top: 0; background: #7444b4; }
.first .command, .first .time { opacity: .55; }
.command {
  margin-top: 13px; line-height: 68px; letter-spacing: .110px;
  text-decoration: underline 3px; text-underline-offset: 5px; text-decoration-skip-ink: none;
}
.outgoing .time { margin: 44px 0 0 12px; color: #c9a9fb; }
.checks { width: 42px; height: 24px; margin: 52px 0 0 5px; fill: none; stroke: #fff; stroke-width: 2.800; stroke-linecap: round; stroke-linejoin: round; flex: none; }
.first .checks { opacity: .3; }
.tail { position: absolute; right: -14px; bottom: 0; width: 50px; height: 55px; fill: #884bf5; }
.first .tail { fill: #7444b4; }
.warning .tail { right: auto; left: -14px; fill: #222533; }

.keyboard { display: flex; flex-direction: column; gap: 6px; margin: 6px 0 0 27px; }
.wide { width: 1149px; }
.narrow { width: 897px; }
button {
  display: flex; align-items: center; justify-content: center; height: 126px; padding: 0 0 3px;
  border: 0; border-radius: 26px; color: #fff; font: 500 46.500px Inter, sans-serif;
}
button:last-child { border-radius: 26px 26px 48px 48px; }
.wide button { background: linear-gradient(94deg, #312d3a 0%, #332e39 42%, #3a2d38 62%, #3b2e39 100%); }
.wide button:last-child { background: linear-gradient(94deg, #302d3a 0%, #332e39 50%, #382e3a 72%, #3c2e37 100%); }
.narrow button { background: linear-gradient(92deg, #2a3039 0%, #29303a 30%, #2f303b 58%, #333134 72%, #3a3132 100%); }
.glyph {
  flex: none; width: 60px; height: 60px; margin-right: 6px; display: flex; justify-content: center;
  line-height: 62px; font-size: 47px; font-family: "Noto Color Emoji", sans-serif;
}
.glyph.after { margin: 0 0 0 16px; }
.s1 { letter-spacing: .320px; }
.s2 { letter-spacing: .150px; }
.s3 { letter-spacing: -.100px; }

.unread {
  width: 1320px; height: 75px; margin-top: 28px; line-height: 72px; text-align: center;
  font-size: 38px; text-indent: -2px;
  background: linear-gradient(92deg, #1b1e29 0%, #18202b 20%, #1e1e29 38%, #221f27 55%, #2c2022 72%, #29201d 100%);
}

.fade { position: absolute; left: 0; width: 1320px; }
.fade.top { top: 0; height: 300px; background: linear-gradient(#000 12%, rgba(0, 0, 0, .8) 36%, rgba(0, 0, 0, .2) 64%, rgba(0, 0, 0, .07) 82%, transparent); }
.fade.bottom { bottom: 0; height: 270px; background: linear-gradient(transparent, rgba(0, 0, 0, .15) 25%, rgba(0, 0, 0, .6) 65%, rgba(0, 0, 0, .82)); }

.glass {
  box-sizing: border-box; display: flex; border: 2px solid rgba(255, 255, 255, .88);
  border-radius: 67px; background: #1a1a1a;
}
svg { flex: none; }
.topbar {
  position: absolute; top: 0; left: 0; width: 1320px; box-sizing: border-box;
  display: flex; justify-content: space-between; padding: 53px 47px 0 48px;
}
.back { width: 202px; height: 134px; align-items: center; padding-left: 46px; gap: 11px; }
.back svg { fill: none; stroke: #fff; stroke-width: 5.500; stroke-linecap: round; stroke-linejoin: round; }
.count {
  width: 78px; height: 54px; border-radius: 27px; background: #fff; color: #000;
  font-size: 38px; line-height: 55px; text-align: center;
}
.title {
  width: 775px; height: 134px; flex-direction: column; align-items: center; padding-top: 14px;
  background: linear-gradient(90deg, #1a1a1b 70%, #241a2c 84%, #2a1b37 100%);
}
h1 { display: flex; margin: 0 11px 0 0; font-size: 48.500px; font-weight: 600; line-height: 60px; letter-spacing: .860px; white-space: nowrap; }
h1 svg { margin: 10px 0 0 14px; }
.title p { margin: 0 4px 0 0; font-size: 35px; line-height: 42px; letter-spacing: .280px; color: #8b8b8d; }
.avatar { width: 134px; height: 134px; padding: 8px; background: #2b1d36; }
.avatar svg { border-radius: 50%; background: linear-gradient(160deg, #c4488f, #d1509d); }

.composer {
  position: absolute; top: 2525px; left: 0; width: 1320px; box-sizing: border-box;
  display: flex; justify-content: space-between; padding: 0 77px;
}
.menu { width: 263px; height: 122px; padding: 8px; }
.menu-fill {
  width: 243px; height: 102px; box-sizing: border-box; padding-left: 31px; gap: 25px;
  display: flex; align-items: center; border-radius: 51px; background: #5288f0;
  font-size: 44px; font-weight: 600; letter-spacing: -.510px;
}
.menu svg { stroke: #fff; stroke-width: 5; stroke-linecap: round; }
.round { width: 122px; height: 122px; }
.round svg { margin: -2px; fill: none; stroke: #fff; stroke-width: 5.500; stroke-linecap: round; stroke-linejoin: round; }
.round svg > * { vector-effect: non-scaling-stroke; }
.field { width: 611px; height: 122px; justify-content: space-between; align-items: center; padding: 0 30px 0 33px; color: #7d7d7d; font-size: 49px; letter-spacing: -.520px; }
.field svg { fill: none; stroke: #8c8c8c; stroke-width: 5; stroke-linejoin: round; }
</style>
